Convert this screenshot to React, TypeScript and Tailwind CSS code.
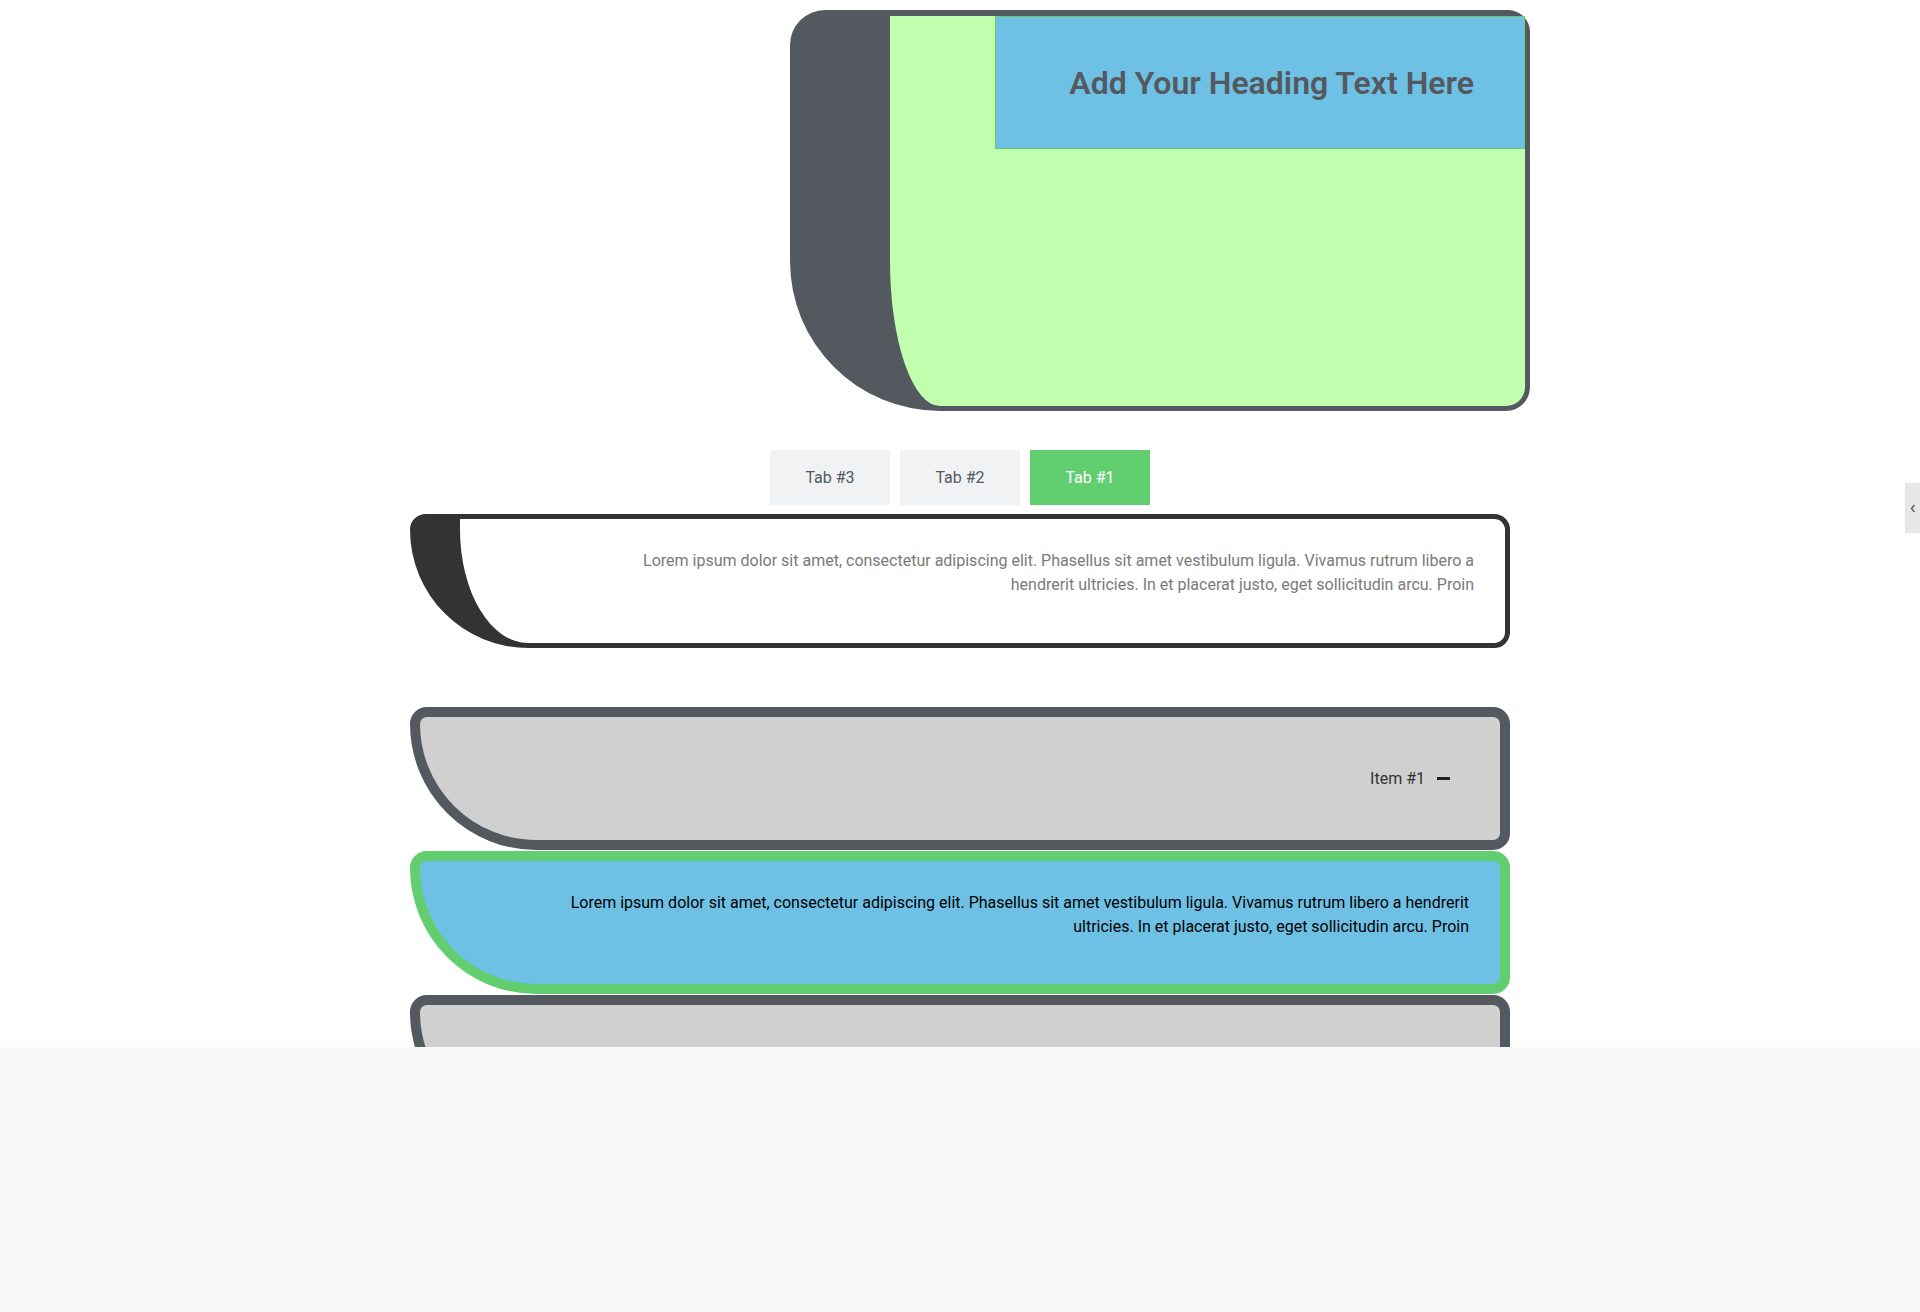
import React from "react";

export default function App() {
  return (
    <div className="relative w-full min-h-[1312px] bg-white font-['Roboto',sans-serif]">
      <div className="h-[1047px] overflow-hidden">
        <div className="w-[1140px] mx-auto pt-[10px]">
          {/* Top card */}
          <div className="ml-auto w-[740px] h-[401px] bg-[#C1FFAF] border-[#54595F] border-t-[6px] border-r-[5px] border-b-[5px] border-l-[100px] rounded-[35px_22px_24px_150px]">
            <div className="ml-auto w-[530px] h-[133px] bg-[#6EC1E4] border border-[#61CE70] flex items-center justify-end pr-[50px]">
              <h2 className="text-[32px] font-semibold leading-none text-[#54595F]">
                Add Your Heading Text Here
              </h2>
            </div>
          </div>

          {/* Tabs */}
          <div className="mt-[39px] flex justify-center gap-[10px]">
            <button className="w-[120px] h-[55px] bg-[#F1F2F4] text-[#54595F] text-[16px]">Tab #3</button>
            <button className="w-[120px] h-[55px] bg-[#F1F2F4] text-[#54595F] text-[16px]">Tab #2</button>
            <button className="w-[120px] h-[55px] bg-[#61CE70] text-white text-[16px]">Tab #1</button>
          </div>

          {/* Tab content */}
          <div className="mt-[9px] mx-[20px] h-[134px] border-[#333333] border-[5px] border-l-[50px] rounded-[20px_20px_20px_150px] bg-white pt-[30px] pr-[31px]">
            <p className="ml-auto w-[860px] text-right text-[16px] leading-[24px] text-[#7A7A7A]">
              Lorem ipsum dolor sit amet, consectetur adipiscing elit. Phasellus sit amet vestibulum ligula. Vivamus rutrum libero a hendrerit ultricies. In et placerat justo, eget sollicitudin arcu. Proin
            </p>
          </div>

          {/* Accordion */}
          <div className="mt-[59px] mx-[20px] flex flex-col gap-[1px]">
            <div className="h-[143px] border-[10px] border-[#54595F] bg-[#D0D0D0] rounded-[20px_20px_20px_150px] flex items-center justify-end pr-[50px]">
              <span className="text-[16px] text-[#333333]">Item #1</span>
              <span className="ml-[12px] w-[13px] h-[3px] bg-[#222222]" />
            </div>
            <div className="h-[143px] border-[10px] border-[#61CE70] bg-[#6EC1E4] rounded-[20px_20px_20px_150px] pt-[30px] pr-[31px]">
              <p className="ml-auto w-[920px] text-right text-[16px] leading-[24px] text-black">
                Lorem ipsum dolor sit amet, consectetur adipiscing elit. Phasellus sit amet vestibulum ligula. Vivamus rutrum libero a hendrerit ultricies. In et placerat justo, eget sollicitudin arcu. Proin
              </p>
            </div>
            <div className="h-[143px] border-[10px] border-[#54595F] bg-[#D0D0D0] rounded-[20px_20px_20px_150px]" />
          </div>
        </div>
      </div>

      <div className="h-[265px] bg-[#F8F9F8]" />

      {/* Side handle */}
      <div className="absolute right-0 top-[483px] w-[15px] h-[50px] bg-[#E6E7E8] flex items-center justify-center">
        <svg width="6" height="9" viewBox="0 0 6 9" fill="none">
          <path d="M4.5 1 L1.5 4.5 L4.5 8" stroke="#555" strokeWidth="1.3" />
        </svg>
      </div>
    </div>
  );
}
